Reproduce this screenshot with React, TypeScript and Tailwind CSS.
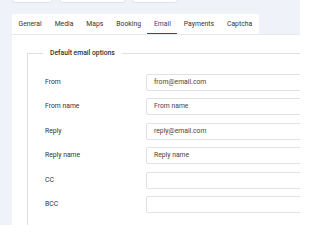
import React from "react";

const tabs = ["General", "Media", "Maps", "Booking", "Email", "Payments", "Captcha"];
const rows: [string, string][] = [
  ["From", "from@email.com"],
  ["From name", "From name"],
  ["Reply", "reply@email.com"],
  ["Reply name", "Reply name"],
  ["CC", ""],
  ["BCC", ""],
];

export default function App() {
  return (
    <div
      className="w-[300px] h-[225px] overflow-hidden bg-[#eff2f8] text-[#2f3133]"
      style={{ fontFamily: "Roboto, 'Liberation Sans', sans-serif" }}
    >
      <div className="flex gap-[6px] pl-[12px] mt-[-17px]">
        <div className="w-[41px] h-[20px] shrink-0 bg-white border border-[#dde2ea] rounded-[3px]" />
        <div className="w-[67px] h-[20px] shrink-0 bg-white border border-[#dde2ea] rounded-[3px]" />
        <div className="w-[46px] h-[20px] shrink-0 bg-white border border-[#dde2ea] rounded-[3px]" />
      </div>
      <div className="ml-[12px] mt-[11px] w-[420px]">
        <div className="flex">
          <div className="flex bg-white h-[20px] items-stretch">
            {tabs.map((t) => (
              <div
                key={t}
                className={
                  "px-[6.5px] flex items-center pt-[1px] text-[6.8px] leading-none " +
                  (t === "Email"
                    ? "text-[#2a4a6e] border-b border-[#34506f]"
                    : "text-[#333]")
                }
              >
                {t}
              </div>
            ))}
          </div>
        </div>
        <div className="bg-white border-t border-[#e6e8ec] h-[220px] pl-[15px] pt-[13px]">
          <fieldset className="border border-[#dcdfe3] pl-[17px] pb-[40px] m-0 w-[400px]">
            <legend className="ml-[-2px] px-[7px] text-[6.8px] leading-[10px] font-medium text-[#2f3133]">
              Default email options
            </legend>
            <div className="flex flex-col gap-[7.5px] pt-[15.5px]">
              {rows.map(([label, value]) => (
                <div key={label} className="flex items-center">
                  <div className="w-[101px] shrink-0 text-[6.8px] text-[#333]">{label}</div>
                  <div className="w-[260px] shrink-0 h-[17px] border border-[#dfe2e6] rounded-[2px] flex items-center pl-[7px] text-[6.8px] text-[#444]">
                    {value}
                  </div>
                </div>
              ))}
            </div>
          </fieldset>
        </div>
      </div>
    </div>
  );
}
